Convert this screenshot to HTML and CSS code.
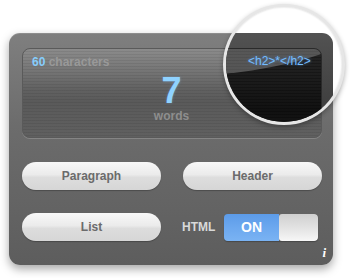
FILE: index.html
```html
<!DOCTYPE html>
<html>
<head>
<meta charset="utf-8">
<link rel="stylesheet" href="styles.css">
</head>
<body>
<div class="stage">
  <div class="panel">
    <div class="display">
      <div class="count"><span class="num">60</span> characters</div>
      <div class="big">7</div>
      <div class="unit">words</div>
    </div>
    <div class="buttons">
      <button class="btn">Paragraph</button>
      <button class="btn">Header</button>
      <button class="btn">List</button>
      <div class="html-row">
        <span class="html-label">HTML</span>
        <div class="toggle"><span class="on">ON</span><span class="knob"></span></div>
      </div>
    </div>
    <div class="info">i</div>
  </div>
  <div class="lens">
    <div class="lens-panel"></div>
    <div class="lens-display"><div class="gloss"></div></div>
    <div class="lens-text">&lt;h2&gt;*&lt;/h2&gt;</div>
  </div>
</div>
</body>
</html>
```
FILE: styles.css
```css
html, body {
  margin: 0;
  padding: 0;
  background: #ffffff;
  font-family: "Liberation Sans", Arial, sans-serif;
}
.stage {
  position: relative;
  width: 353px;
  height: 278px;
  padding: 33px 0 0 9px;
  box-sizing: border-box;
  overflow: hidden;
}
.panel {
  position: relative;
  width: 324px;
  height: 232px;
  box-sizing: border-box;
  padding: 15px 11px 0 13px;
  border-radius: 11px;
  background: linear-gradient(#7f7f7f, #6c6c6c 40%, #5d5d5d);
  box-shadow: 0 4px 10px rgba(0,0,0,0.35), inset 0 1px 0 rgba(255,255,255,0.12);
}
.display {
  height: 90px;
  box-sizing: border-box;
  border-radius: 8px;
  border: 1px solid #5a5a5a;
  box-shadow: 0 1px 0 rgba(255,255,255,0.18);
  padding: 6px 10px 0 9px;
  display: flex;
  flex-direction: column;
  background:
    repeating-linear-gradient(to bottom, rgba(0,0,0,0) 0px, rgba(0,0,0,0) 2px, rgba(0,0,0,0.07) 2px, rgba(0,0,0,0.07) 3px),
    linear-gradient(#8b8b8b, #757575 25%, #626262 45%, #5a5a5a 60%, #606060);
}
.count {
  font-weight: bold;
  font-size: 12px;
  line-height: 14px;
  color: #999999;
}
.num { color: #86cdfc; }
.big {
  margin-top: 7px;
  text-align: center;
  font-weight: bold;
  font-size: 36px;
  line-height: 30px;
  color: #8fd2ff;
  text-shadow: 0 0 3px rgba(120,190,255,0.35);
}
.unit {
  margin-top: 3px;
  text-align: center;
  font-weight: bold;
  font-size: 12px;
  line-height: 14px;
  color: #8e8e8e;
}
.buttons {
  margin-top: 24px;
  display: grid;
  grid-template-columns: 139px 139px;
  column-gap: 22px;
  row-gap: 23px;
}
.btn {
  height: 28px;
  border-radius: 14px;
  border: none;
  padding: 0;
  font-family: "Liberation Sans", Arial, sans-serif;
  font-weight: bold;
  font-size: 12px;
  color: #6b6b6b;
  background: linear-gradient(#f8f8f8, #ebebeb 45%, #dddddd 55%, #d6d6d6);
  box-shadow: 0 1px 1px rgba(0,0,0,0.25);
}
.html-row {
  display: flex;
  align-items: center;
  height: 28px;
}
.html-label {
  margin-left: -1px;
  width: 42px;
  font-weight: bold;
  font-size: 12px;
  color: #d9d9d9;
}
.toggle {
  display: flex;
  width: 94px;
  height: 27px;
  border-radius: 4px;
  overflow: hidden;
  box-shadow: 0 1px 1px rgba(0,0,0,0.25);
}
.on {
  width: 55px;
  display: flex;
  align-items: center;
  justify-content: center;
  font-weight: bold;
  font-size: 14px;
  color: #ffffff;
  background: linear-gradient(#5c9be8, #6ca8ef 50%, #7ab3f3);
}
.knob {
  flex: 1;
  border-radius: 3px;
  background: linear-gradient(#cfcfcf, #e6e6e6 60%, #f7f7f7);
}
.info {
  position: absolute;
  right: 7px;
  bottom: 7px;
  font-family: "Liberation Serif", "Times New Roman", serif;
  font-style: italic;
  font-weight: bold;
  font-size: 13px;
  line-height: 10px;
  color: #ffffff;
}
.lens {
  position: absolute;
  left: 223px;
  top: 4px;
  width: 122px;
  height: 121px;
  box-sizing: border-box;
  border-radius: 50%;
  border: 3px solid #e6e6e6;
  background: #ffffff;
  overflow: hidden;
  box-shadow: 0 2px 5px rgba(0,0,0,0.3), inset 0 0 2px rgba(0,0,0,0.2);
}
.lens-panel {
  position: absolute;
  left: -217px;
  top: 26px;
  width: 324px;
  height: 232px;
  border-radius: 11px;
  background: linear-gradient(#525252, #404040 30%, #363636);
}
.lens-display {
  position: absolute;
  left: -204px;
  top: 41px;
  width: 300px;
  height: 90px;
  box-sizing: border-box;
  border-radius: 8px;
  border: 1px solid #2a2a2a;
  overflow: hidden;
  background:
    repeating-linear-gradient(to bottom, rgba(0,0,0,0) 0px, rgba(0,0,0,0) 2px, rgba(0,0,0,0.25) 2px, rgba(0,0,0,0.25) 3px),
    linear-gradient(#262626, #1a1a1a 40%, #111111 70%, #181818);
}
.gloss {
  position: absolute;
  left: -60px;
  right: -60px;
  top: -120px;
  height: 147px;
  border-radius: 50%;
  background: linear-gradient(rgba(255,255,255,0.12), rgba(255,255,255,0.25));
}
.lens-text {
  position: absolute;
  left: 22px;
  top: 48px;
  font-family: "Liberation Sans", Arial, sans-serif;
  font-weight: normal;
  font-size: 12px;
  line-height: 12px;
  color: #74bcff;
  text-shadow: 0 0 3px rgba(90,170,255,0.6);
}
```
